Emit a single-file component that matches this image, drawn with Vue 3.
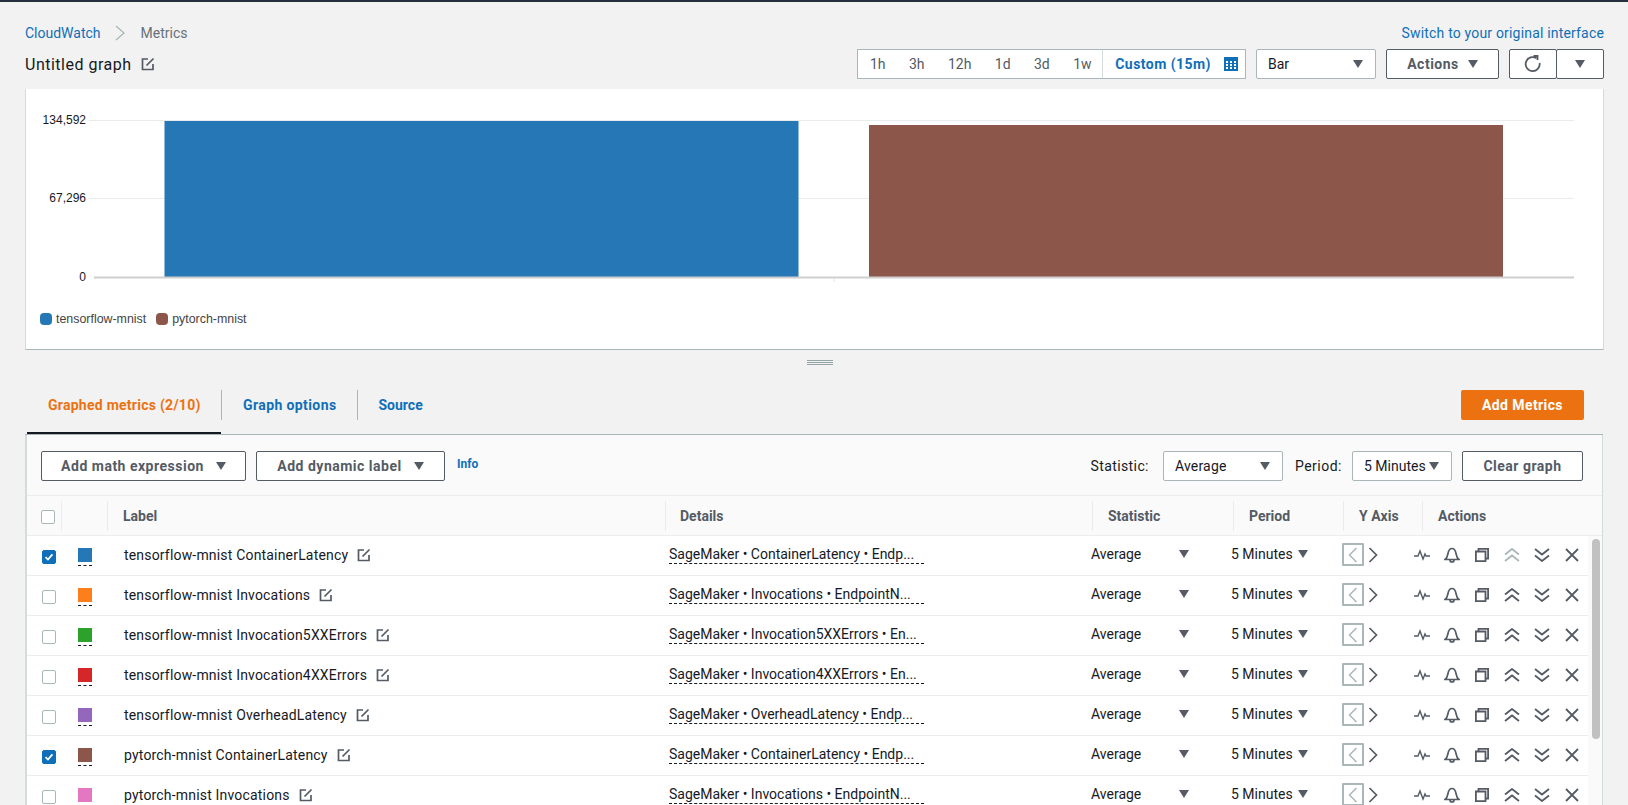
<script setup>
const ranges = ['1h', '3h', '12h', '1d', '3d', '1w']

const rows = [
  { label: 'tensorflow-mnist ContainerLatency', details: 'SageMaker • ContainerLatency • Endp...', color: '#2577b5', checked: true, firstRow: true },
  { label: 'tensorflow-mnist Invocations', details: 'SageMaker • Invocations • EndpointN...', color: '#fd7f1c', checked: false },
  { label: 'tensorflow-mnist Invocation5XXErrors', details: 'SageMaker • Invocation5XXErrors • En...', color: '#2ca12c', checked: false },
  { label: 'tensorflow-mnist Invocation4XXErrors', details: 'SageMaker • Invocation4XXErrors • En...', color: '#d62728', checked: false },
  { label: 'tensorflow-mnist OverheadLatency', details: 'SageMaker • OverheadLatency • Endp...', color: '#9467bd', checked: false },
  { label: 'pytorch-mnist ContainerLatency', details: 'SageMaker • ContainerLatency • Endp...', color: '#8c564b', checked: true },
  { label: 'pytorch-mnist Invocations', details: 'SageMaker • Invocations • EndpointN...', color: '#e377c2', checked: false }
]
</script>

<template>
  <div class="page">
    <div class="crumbs">
      <div class="crumb-left">
        <a class="link">CloudWatch</a>
        <svg class="crumb-sep" width="12" height="16" viewBox="0 0 12 16"><path d="M2 1l8 7-8 7" fill="none" stroke="#aab7b8" stroke-width="1.3" /></svg>
        <span class="crumb-current">Metrics</span>
      </div>
      <a class="link switch">Switch to your original interface</a>
    </div>

    <div class="title-row">
      <div class="title">
        <span>Untitled graph</span>
        <svg class="edit" viewBox="0 0 14 14"><path d="M7 2H1.500v10.500H12V7M5.500 8.500l7-7" fill="none" stroke="#545b64" stroke-width="1.700" /></svg>
      </div>
      <div class="controls">
        <div class="ranges">
          <div class="range-list">
            <span v-for="r in ranges" :key="r">{{ r }}</span>
          </div>
          <div class="custom">
            <span>Custom (15m)</span>
            <svg width="14" height="14" viewBox="0 0 14 14">
              <rect width="14" height="14" fill="#0f6fb8" />
              <path d="M2 4h2v2H2zM6 4h2v2H6zM10 4h2v2h-2zM2 7h2v2H2zM6 7h2v2H6zM10 7h2v2h-2zM2 10h2v2H2zM6 10h2v2H6zM10 10h2v2h-2z" fill="#fff" />
            </svg>
          </div>
        </div>
        <div class="select bar-select">
          <span>Bar</span>
          <i class="caret"></i>
        </div>
        <button class="btn actions-btn">Actions <i class="caret"></i></button>
        <div class="refresh-group">
          <button class="btn refresh">
            <svg width="18" height="18" viewBox="0 0 18 18"><path d="M12.500 3.200A7 7 0 1 0 15.600 8" fill="none" stroke="#545b64" stroke-width="1.800" /><path d="M9.500 1h4v4" fill="none" stroke="#545b64" stroke-width="1.800" /></svg>
          </button>
          <button class="btn refresh-caret"><i class="caret"></i></button>
        </div>
      </div>
    </div>

    <div class="graph-card">
      <svg class="chart" width="1577" height="216" viewBox="26 89 1577 216">
        <line x1="89" y1="120.500" x2="1574" y2="120.500" stroke="#e9ebed" />
        <line x1="89" y1="198.500" x2="1574" y2="198.500" stroke="#e9ebed" />
        <rect x="164.500" y="121" width="634" height="156" fill="#2577b5" />
        <rect x="869" y="125" width="634" height="152" fill="#8c564b" />
        <line x1="94" y1="277.500" x2="1574" y2="277.500" stroke="#cfcfcf" stroke-width="2" />
        <line x1="834" y1="278" x2="834" y2="282" stroke="#e4e4e4" />
        <text x="86" y="124" text-anchor="end" class="axis-label">134,592</text>
        <text x="86" y="202" text-anchor="end" class="axis-label">67,296</text>
        <text x="86" y="281" text-anchor="end" class="axis-label">0</text>
      </svg>
      <div class="legend">
        <span class="legend-dot blue"></span><span class="legend-name">tensorflow-mnist</span>
        <span class="legend-dot brown"></span><span class="legend-name">pytorch-mnist</span>
      </div>
    </div>

    <div class="drag-handle"><i></i><i></i><i></i></div>

    <div class="tabs-row">
      <div class="tabs">
        <div class="tab active">Graphed metrics (2/10)</div>
        <div class="tab options">Graph options</div>
        <div class="tab source">Source</div>
      </div>
      <button class="add-metrics">Add Metrics</button>
    </div>

    <div class="panel">
      <div class="toolbar">
        <div class="toolbar-left">
          <button class="btn math">Add math expression <i class="caret"></i></button>
          <button class="btn dyn">Add dynamic label <i class="caret"></i></button>
          <a class="info">Info</a>
        </div>
        <div class="toolbar-right">
          <span class="tool-label">Statistic:</span>
          <div class="select stat-select"><span>Average</span><i class="caret"></i></div>
          <span class="tool-label period-label">Period:</span>
          <div class="select period-select"><span>5 Minutes</span><i class="caret"></i></div>
          <button class="btn clear">Clear graph</button>
        </div>
      </div>

      <div class="head grid-row">
        <div class="cell check-head"><span class="box"></span></div>
        <div class="cell col-div"></div>
        <div class="cell col-div head-label">Label</div>
        <div class="cell col-div head-label details-head">Details</div>
        <div class="cell col-div head-label">Statistic</div>
        <div class="cell col-div head-label">Period</div>
        <div class="cell col-div head-label">Y Axis</div>
        <div class="cell col-div head-label">Actions</div>
      </div>

      <div class="body">
        <div class="rows">
          <div v-for="row in rows" :key="row.label" class="grid-row data-row">
            <div class="cell check-cell">
              <span class="box" :class="{ checked: row.checked }">
                <svg v-if="row.checked" width="14" height="14" viewBox="0 0 14 14"><path d="M3 7.200l2.800 2.800L11 4" fill="none" stroke="#fff" stroke-width="2" /></svg>
              </span>
            </div>
            <div class="cell swatch-cell">
              <span class="swatch" :style="{ background: row.color }"></span>
            </div>
            <div class="cell label-cell">
              <span>{{ row.label }}</span>
              <svg class="edit" viewBox="0 0 14 14"><path d="M7 2H1.500v10.500H12V7M5.500 8.500l7-7" fill="none" stroke="#545b64" stroke-width="1.700" /></svg>
            </div>
            <div class="cell details-cell"><span class="details">{{ row.details }}</span></div>
            <div class="cell stat-cell"><span>Average</span><i class="caret small"></i></div>
            <div class="cell period-cell"><span>5 Minutes</span><i class="caret small"></i></div>
            <div class="cell axis-cell">
              <span class="axis-left">
                <svg width="10" height="16" viewBox="0 0 10 16"><path d="M8.500 1L1.500 8l7 7" fill="none" stroke="#aab7b8" stroke-width="1.500" /></svg>
              </span>
              <svg width="10" height="16" viewBox="0 0 10 16"><path d="M1.500 1l7 7-7 7" fill="none" stroke="#545b64" stroke-width="1.700" /></svg>
            </div>
            <div class="cell action-cell">
              <svg width="16" height="14" viewBox="0 0 16 14"><path d="M0 8h4l2-5 3 8 2-5 1 2h4" fill="none" stroke="#545b64" stroke-width="1.400" /></svg>
              <svg width="16" height="16" viewBox="0 0 16 16"><path d="M1 12.500c2-1.500 2.500-3 3-6C4.500 3.500 6 1.500 8 1.500s3.500 2 4 5c.5 3 1 4.500 3 6zM6 13a2 2 0 0 0 4 0" fill="none" stroke="#545b64" stroke-width="1.700" /></svg>
              <svg class="copy" width="14" height="14" viewBox="0 0 14 14"><path d="M3.500 3.500V.9h9.600v9.600h-2.600M.9 3.500h9.600v9.600H.9z" fill="none" stroke="#545b64" stroke-width="1.800" /></svg>
              <svg width="16" height="14" viewBox="0 0 16 14"><path d="M1 6.500L8 1l7 5.500M1 13l7-5.500 7 5.500" fill="none" :stroke="row.firstRow ? '#aab7b8' : '#545b64'" stroke-width="1.800" /></svg>
              <svg width="16" height="14" viewBox="0 0 16 14"><path d="M1 1l7 5.500L15 1M1 7.500L8 13l7-5.500" fill="none" stroke="#545b64" stroke-width="1.800" /></svg>
              <svg class="close" width="14" height="14" viewBox="0 0 14 14"><path d="M1 1l12 12M13 1L1 13" fill="none" stroke="#545b64" stroke-width="1.800" /></svg>
            </div>
          </div>
        </div>
        <div class="scroll-track"><div class="scroll-thumb"></div></div>
      </div>
    </div>
  </div>
</template>

<style scoped>
.page {
  box-sizing: border-box;
  height: 805px;
  overflow: hidden;
  background: #f2f2f2;
  border-top: 2px solid #232f3e;
  padding: 0 24px 0 25px;
  font-family: Roboto, "Liberation Sans", sans-serif;
  font-size: 14px;
  color: #16191f;
}

.crumbs {
  display: flex;
  justify-content: space-between;
  align-items: center;
  height: 20px;
  margin-top: 21px;
}

.crumb-left {
  display: flex;
  align-items: center;
}

.link {
  color: #0f6fb8;
}

.switch {
  letter-spacing: 0.18px;
}

.crumb-sep {
  margin: 0 15px 0 13px;
}

.crumb-current {
  color: #687078;
}

.title-row {
  display: flex;
  justify-content: space-between;
  align-items: center;
  height: 30px;
  margin-top: 6px;
}

.title {
  display: flex;
  align-items: center;
  gap: 9px;
  font-size: 16px;
  letter-spacing: 0.5px;
}

.edit {
  width: 14px;
  height: 14px;
  flex: none;
}

.controls {
  display: flex;
  gap: 10px;
  align-items: stretch;
  height: 30px;
}

.ranges {
  display: flex;
  align-items: center;
  justify-content: space-between;
  width: 389px;
  box-sizing: border-box;
  border: 1px solid #aab7b8;
  background: #fff;
  padding-left: 12px;
  color: #545b64;
}

.range-list {
  display: flex;
  gap: 23.400px;
}

.custom {
  display: flex;
  align-items: center;
  gap: 13px;
  height: 100%;
  padding: 0 7px 0 12px;
  border-left: 1px solid #d5dbdb;
  color: #0f6fb8;
  font-weight: 700;
  letter-spacing: 0.46px;
  white-space: nowrap;
}

.select {
  display: flex;
  align-items: center;
  justify-content: space-between;
  box-sizing: border-box;
  height: 30px;
  background: #fff;
  border: 1px solid #aab7b8;
  border-radius: 2px;
  padding: 0 12px 0 11px;
  color: #16191f;
}

.bar-select {
  width: 120px;
}

.caret {
  display: inline-block;
  flex: none;
  width: 0;
  height: 0;
  border-left: 5.500px solid transparent;
  border-right: 5.500px solid transparent;
  border-top: 8px solid #545b64;
}

.caret.small {
  border-left-width: 5px;
  border-right-width: 5px;
}

.btn {
  display: flex;
  align-items: center;
  justify-content: center;
  box-sizing: border-box;
  height: 30px;
  background: #fff;
  border: 1px solid #545b64;
  border-radius: 2px;
  padding: 0;
  font: inherit;
  font-weight: 700;
  letter-spacing: 0.5px;
  color: #545b64;
}

.actions-btn {
  width: 113px;
  gap: 9px;
}

.refresh-group {
  display: flex;
}

.refresh {
  width: 48px;
}

.refresh-caret {
  width: 48px;
  margin-left: -1px;
}

.graph-card {
  box-sizing: border-box;
  width: 1579px;
  height: 261px;
  margin-top: 10px;
  background: #fff;
  border-bottom: 1px solid #aab7b8;
  border-left: 1px solid #d5dbdb;
  border-right: 1px solid #d5dbdb;
  display: flex;
  flex-direction: column;
}

.chart {
  display: block;
  height: 216px;
  width: 1577px;
}

.axis-label {
  font-family: "Liberation Sans", Arial, sans-serif;
  font-size: 12px;
  fill: #16191f;
}

.legend {
  display: flex;
  align-items: center;
  height: 20px;
  margin-top: 4px;
  padding-left: 14px;
  font-family: "Liberation Sans", Arial, sans-serif;
  font-size: 12.400px;
  color: #444;
}

.legend-dot {
  width: 12px;
  height: 12px;
  border-radius: 4px;
  margin-right: 4px;
}

.blue {
  background: #2577b5;
}

.brown {
  background: #8c564b;
  margin-left: 10px;
}

.drag-handle {
  display: flex;
  flex-direction: column;
  gap: 1px;
  width: 26px;
  margin: 10px 0 0 782px;
}

.drag-handle i {
  display: block;
  height: 1px;
  background: #95a5a6;
}

.tabs-row {
  display: flex;
  justify-content: space-between;
  align-items: flex-start;
  width: 1578px;
  height: 70px;
  border-bottom: 1px solid #aab7b8;
  box-sizing: border-box;
  padding-top: 25px;
}

.tabs {
  display: flex;
  height: 44px;
}

.tab {
  display: flex;
  align-items: center;
  height: 30px;
  padding: 0 20px 0 21px;
  color: #0f6fb8;
  font-weight: 700;
  letter-spacing: 0.4px;
  border-right: 1px solid #aab7b8;
}

.tab.source {
  letter-spacing: 0;
  border-right: none;
}

.tab.active {
  color: #ec7211;
  position: relative;
  width: 197px;
  box-sizing: border-box;
  padding-left: 23px;
  padding-right: 0;
  letter-spacing: 0.26px;
  white-space: nowrap;
}

.tab.active::after {
  content: "";
  position: absolute;
  left: 2px;
  right: 0;
  top: 42px;
  height: 2px;
  background: #16191f;
}

.add-metrics {
  width: 123px;
  height: 30px;
  margin-right: 19px;
  background: #ec7211;
  border: none;
  border-radius: 2px;
  color: #fff;
  font: inherit;
  font-weight: 700;
  letter-spacing: 0.4px;
}

.panel {
  width: 1578px;
  box-sizing: border-box;
  border-left: 2px solid #d5dbdb;
  border-right: 1px solid #d5dbdb;
  background: #fafafa;
}

.toolbar {
  display: flex;
  justify-content: space-between;
  align-items: flex-start;
  box-sizing: border-box;
  height: 61px;
  padding: 16px 19px 0 14px;
  border-bottom: 1px solid #eaeded;
}

.toolbar-left,
.toolbar-right {
  display: flex;
  align-items: center;
}

.math {
  width: 205px;
  gap: 12px;
}

.dyn {
  width: 189px;
  gap: 12px;
  margin-left: 10px;
}

.info {
  margin: 0 0 5px 12px;
  color: #0f6fb8;
  font-size: 12px;
  font-weight: 700;
}

.tool-label {
  margin-right: 14px;
  letter-spacing: 0.4px;
}

.period-label {
  margin-right: 10px;
  letter-spacing: 0.5px;
}

.stat-select {
  width: 120px;
  margin-right: 12px;
  letter-spacing: 0.2px;
}

.period-select {
  width: 100px;
  margin-right: 10px;
}

.clear {
  width: 121px;
}

.grid-row {
  display: grid;
  grid-template-columns: 34px 46px 558px 427px 141px 110px 79px 166px;
  align-items: center;
}

.head {
  height: 40px;
  border-bottom: 1px solid #eaeded;
  box-sizing: border-box;
  color: #545b64;
  font-weight: 700;
}

.cell {
  display: flex;
  align-items: center;
  box-sizing: border-box;
  white-space: nowrap;
}

.col-div {
  height: 30px;
  border-left: 1px solid #eaeded;
}

.head-label {
  padding-left: 15px;
}

.details-head {
  padding-left: 14px;
}

.check-head {
  padding-left: 14px;
  padding-top: 2px;
}

.box {
  display: flex;
  align-items: center;
  justify-content: center;
  box-sizing: border-box;
  width: 14px;
  height: 14px;
  background: #fff;
  border: 1px solid #aab7b8;
  border-radius: 2px;
}

.box.checked {
  background: #0f6fb8;
  border-color: #0f6fb8;
}

.body {
  display: flex;
  background: #fafafa;
}

.rows {
  width: 1561px;
  flex: none;
  background: #fff;
}

.data-row {
  height: 40px;
  box-sizing: border-box;
  border-bottom: 1px solid #eaeded;
}

.check-cell {
  padding-left: 15px;
  padding-top: 2px;
}

.swatch-cell {
  padding-left: 17px;
}

.swatch {
  position: relative;
  display: block;
  width: 14px;
  height: 14px;
  margin-top: -2px;
}

.swatch::after {
  content: "";
  position: absolute;
  left: 0;
  right: 0;
  top: 17px;
  border-top: 1px dashed #16191f;
}

.label-cell {
  gap: 9px;
  padding-left: 17px;
  margin-top: -2px;
  letter-spacing: 0.18px;
}

.details-cell {
  padding-left: 4px;
}

.details {
  display: block;
  width: 255px;
  margin-top: -1px;
  padding-bottom: 1px;
  border-bottom: 1px dashed #16191f;
}

.stat-cell {
  justify-content: space-between;
  padding-right: 44px;
  margin-top: -3px;
  margin-left: -1px;
}

.period-cell {
  gap: 5px;
  margin-left: -2px;
  margin-top: -3px;
}

.axis-cell {
  gap: 4px;
  margin-left: -1px;
  margin-top: -2px;
}

.axis-left {
  display: flex;
  align-items: center;
  justify-content: center;
  box-sizing: border-box;
  width: 22px;
  height: 23px;
  border: 2px solid #aab7b8;
  border-radius: 1px;
}

.action-cell {
  gap: 14px;
  margin-top: -2px;
  margin-left: -8px;
}

.copy {
  margin: 0 1px;
}

.close {
  margin-left: 1px;
}

.scroll-track {
  flex: 1;
  position: relative;
}

.scroll-thumb {
  position: absolute;
  left: 4px;
  top: 3px;
  width: 8px;
  height: 200px;
  border-radius: 4px;
  background: #c1c1c1;
}
</style>

<style>
html,
body {
  margin: 0;
  overflow: hidden;
}
</style>
